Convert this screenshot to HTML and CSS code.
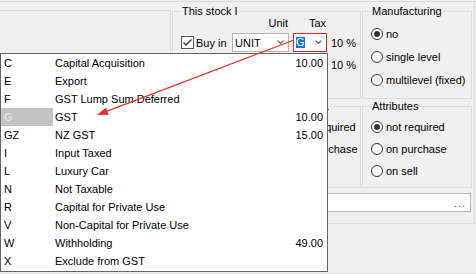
FILE: index.html
```html
<!DOCTYPE html>
<html lang="en">
<head>
    <meta charset="UTF-8">
    <title>Stock item - tax code</title>
    <link rel="stylesheet" href="styles.css">
</head>
<body>
    <div class="top-line"></div>
    <div class="panel">
        <!-- 첫 줄: 재고 / 제조 -->
        <div class="row row-top">
            <div class="side-panel"></div>
            <fieldset class="group group-stock">
                <legend>This stock I</legend>
                <div class="col-labels">
                    <span class="col-unit">Unit</span>
                    <span class="col-tax">Tax</span>
                </div>
                <div class="stock-line">
                    <label class="check">
                        <span class="check-box">
                            <svg width="11" height="11" viewBox="0 0 11 11"><polyline points="1.5,5.5 4,8 9.5,2.5" fill="none" stroke="#333" stroke-width="1.4"/></svg>
                        </span>Buy in
                    </label>
                    <div class="combo combo-unit">
                        <span>UNIT</span>
                        <svg class="chevron" width="7" height="5" viewBox="0 0 7 5"><polyline points="0.5,0.5 3.5,3.5 6.5,0.5" fill="none" stroke="#6d6d6d" stroke-width="1.2"/></svg>
                    </div>
                    <div class="combo combo-tax">
                        <span class="selected">G</span>
                        <svg class="chevron" width="7" height="5" viewBox="0 0 7 5"><polyline points="0.5,0.5 3.5,3.5 6.5,0.5" fill="none" stroke="#6d6d6d" stroke-width="1.2"/></svg>
                    </div>
                    <span class="pct">10 %</span>
                </div>
                <div class="stock-line">
                    <label class="check"><span class="check-box"></span>Sell in</label>
                    <div class="combo combo-unit"><span>UNIT</span></div>
                    <div class="combo combo-plain"><span>G</span></div>
                    <span class="pct">10 %</span>
                </div>
            </fieldset>
            <fieldset class="group group-side">
                <legend>Manufacturing</legend>
                <div class="radio-list radio-list-wide">
                    <div class="radio"><span class="radio-dot checked"></span>no</div>
                    <div class="radio"><span class="radio-dot"></span>single level</div>
                    <div class="radio"><span class="radio-dot"></span>multilevel (fixed)</div>
                </div>
            </fieldset>
        </div>

        <!-- 둘째 줄: 시리얼 / 속성 -->
        <div class="row row-mid">
            <div class="spacer"></div>
            <fieldset class="group group-serial">
                <legend>Serial no.</legend>
                <div class="radio-list">
                    <div class="radio"><span class="radio-dot checked"></span>not required</div>
                    <div class="radio"><span class="radio-dot"></span>on purchase</div>
                </div>
            </fieldset>
            <fieldset class="group group-side">
                <legend>Attributes</legend>
                <div class="radio-list">
                    <div class="radio"><span class="radio-dot checked"></span>not required</div>
                    <div class="radio"><span class="radio-dot"></span>on purchase</div>
                    <div class="radio"><span class="radio-dot"></span>on sell</div>
                </div>
            </fieldset>
        </div>

        <div class="row row-edit">
            <div class="edit"><span class="ellipsis">...</span></div>
        </div>
    </div>
    <div class="bottom-line"></div>

    <!-- 세금 코드 드롭다운 -->
    <div class="dropdown">
        <div class="item"><span class="code">C</span><span class="name">Capital Acquisition</span><span class="rate">10.00</span></div>
        <div class="item"><span class="code">E</span><span class="name">Export</span><span class="rate"></span></div>
        <div class="item"><span class="code">F</span><span class="name">GST Lump Sum Deferred</span><span class="rate"></span></div>
        <div class="item item-current"><span class="code">G</span><span class="name">GST</span><span class="rate">10.00</span></div>
        <div class="item"><span class="code">GZ</span><span class="name">NZ GST</span><span class="rate">15.00</span></div>
        <div class="item"><span class="code">I</span><span class="name">Input Taxed</span><span class="rate"></span></div>
        <div class="item"><span class="code">L</span><span class="name">Luxury Car</span><span class="rate"></span></div>
        <div class="item"><span class="code">N</span><span class="name">Not Taxable</span><span class="rate"></span></div>
        <div class="item"><span class="code">R</span><span class="name">Capital for Private Use</span><span class="rate"></span></div>
        <div class="item"><span class="code">V</span><span class="name">Non-Capital for Private Use</span><span class="rate"></span></div>
        <div class="item"><span class="code">W</span><span class="name">Withholding</span><span class="rate">49.00</span></div>
        <div class="item"><span class="code">X</span><span class="name">Exclude from GST</span><span class="rate"></span></div>
    </div>

    <!-- 빨간 화살표 -->
    <svg class="callout" width="476" height="274" viewBox="0 0 476 274">
        <line x1="294" y1="40" x2="106.5" y2="111.4" stroke="#e3302b" stroke-width="1.3"/>
        <polygon points="97,115 108.7,114.8 105.9,107.4" fill="#e3302b"/>
    </svg>
</body>
</html>
```

FILE: styles.css
```css
* {
    box-sizing: border-box;
    margin: 0;
    padding: 0;
}

body {
    font-family: "Liberation Sans", Arial, sans-serif;
    font-size: 11px;
    color: #000;
    background-color: #f0f0f0;
    width: 476px;
    height: 274px;
    overflow: hidden;
    position: relative;
}

.top-line {
    margin-top: 1px;
    border-top: 1px solid #d9d9d9;
}

.panel {
    width: 475px;
    height: 222px;
    padding-top: 3px;
    border-right: 1px solid #dcdcdc;
    border-bottom: 1px solid #dcdcdc;
}

.row {
    display: flex;
}

.row-top {
    height: 94px;
}

.row-mid {
    height: 88px;
    margin-top: 1px;
}

.row-edit {
    margin-top: 5px;
}

.side-panel {
    width: 171px;
    margin-top: 5px;
    border-top: 1px solid #dcdcdc;
    border-right: 1px solid #dcdcdc;
}

.spacer {
    width: 273px;
}

/* 그룹 박스 */
.group {
    border: 1px solid #dcdcdc;
    padding: 0 8px;
    min-width: 0;
    overflow: visible;
}

.group legend {
    padding: 0 1px;
    line-height: 13px;
    white-space: nowrap;
}

.group-stock {
    width: 189px;
    margin-left: 1px;
    padding-right: 0;
}

.group-side {
    width: 110px;
    margin-left: 1px;
}

.group-serial {
    width: 88px;
}

.col-labels {
    display: flex;
    height: 13px;
    line-height: 13px;
    margin-top: -1px;
    margin-left: 51px;
}

.col-unit {
    width: 57px;
    text-align: right;
    padding-right: 1px;
}

.col-tax {
    width: 34px;
    margin-left: 4px;
    text-align: right;
    padding-right: 1px;
}

.stock-line {
    display: flex;
    align-items: center;
    height: 19px;
    margin-top: 3px;
    white-space: nowrap;
}

.check {
    display: flex;
    align-items: center;
    width: 51px;
    flex-shrink: 0;
}

.check-box {
    width: 13px;
    height: 13px;
    margin-right: 2px;
    border: 1px solid #555;
    background-color: #fff;
    display: flex;
    align-items: center;
    justify-content: center;
}

.combo {
    display: flex;
    align-items: center;
    justify-content: space-between;
    height: 19px;
    padding-left: 2px;
    padding-right: 4px;
    border: 1px solid #b4b4b4;
    background-color: #fff;
    flex-shrink: 0;
}

.combo-unit {
    width: 57px;
}

.combo-tax,
.combo-plain {
    width: 34px;
    margin-left: 4px;
}

.combo-tax {
    border-color: #d8262a;
}

.selected {
    background-color: #0078d7;
    color: #fff;
    line-height: 11px;
}

.chevron {
    display: block;
}

.pct {
    margin-left: 4px;
    flex-shrink: 0;
}

/* 라디오 버튼 */
.radio-list {
    padding-top: 3px;
}

.radio-list-wide {
    padding-top: 4px;
}

.radio {
    display: flex;
    align-items: center;
    height: 22px;
    white-space: nowrap;
}

.radio-list-wide .radio {
    height: 23px;
}

.radio-dot {
    width: 12px;
    height: 12px;
    margin-right: 3px;
    border: 1px solid #333;
    border-radius: 50%;
    background-color: #fff;
    display: flex;
    align-items: center;
    justify-content: center;
    flex-shrink: 0;
}

.radio-dot.checked::after {
    content: "";
    width: 6px;
    height: 6px;
    border-radius: 50%;
    background-color: #333;
}

.edit {
    display: flex;
    align-items: center;
    justify-content: flex-end;
    width: 299px;
    height: 19px;
    margin-left: 172px;
    padding-right: 4px;
    border: 1px solid #b9b9b9;
    background-color: #fff;
}

.ellipsis {
    color: #555;
    line-height: 12px;
    letter-spacing: 1px;
}

.bottom-line {
    margin-top: 49px;
    border-top: 1px solid #dcdcdc;
}

/* 드롭다운 목록 */
.dropdown {
    position: absolute;
    left: 0;
    top: 53px;
    width: 328px;
    height: 219px;
    border: 1px solid #646464;
    background-color: #fff;
}

.item {
    display: grid;
    grid-template-columns: 52px 1fr auto;
    height: 18px;
    line-height: 18px;
}

.code {
    padding-left: 3px;
}

.name {
    padding-left: 2px;
}

.rate {
    padding-right: 4px;
}

.item-current .code {
    background-color: #c3c3c3;
    color: #ececec;
}

.callout {
    position: absolute;
    left: 0;
    top: 0;
    pointer-events: none;
}
```
